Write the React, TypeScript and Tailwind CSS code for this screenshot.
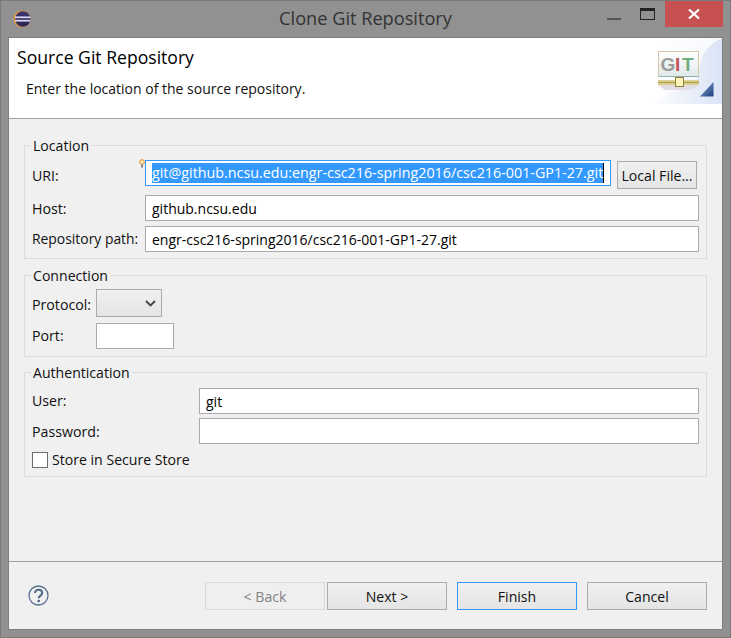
import React from "react";

const font = { fontFamily: '"Open Sans", "Noto Sans", sans-serif' };

function EclipseIcon() {
  return (
    <svg width="18" height="18" viewBox="0 0 18 18">
      <defs>
        <linearGradient id="ec" x1="0" y1="0" x2="0" y2="1">
          <stop offset="0" stopColor="#3c3570" />
          <stop offset="1" stopColor="#2a2550" />
        </linearGradient>
      </defs>
      <circle cx="9" cy="9" r="8.500" fill="#e8963a" />
      <circle cx="9.800" cy="9" r="7.700" fill="url(#ec)" />
      <rect x="2" y="6.400" width="15.400" height="1.800" fill="#d8d6ea" />
      <rect x="2" y="9.800" width="15.400" height="1.800" fill="#d8d6ea" />
    </svg>
  );
}

function GitLogo() {
  return (
    <svg width="71" height="66" viewBox="0 0 71 66" className="block">
      <defs>
        <linearGradient id="bgg" x1="0" y1="0" x2="1" y2="0">
          <stop offset="0" stopColor="#ffffff" />
          <stop offset="0.35" stopColor="#f1f4fb" />
          <stop offset="1" stopColor="#dae4f6" />
        </linearGradient>
        <linearGradient id="box" x1="0" y1="0" x2="0" y2="1">
          <stop offset="0" stopColor="#ffffff" />
          <stop offset="1" stopColor="#dfe8ea" />
        </linearGradient>
        <linearGradient id="tri" x1="0" y1="0" x2="1" y2="1">
          <stop offset="0" stopColor="#8fb2de" />
          <stop offset="1" stopColor="#1c3b78" />
        </linearGradient>
      </defs>
      <rect width="71" height="66" fill="url(#bgg)" />
      <path d="M0 0 H71 C58 6 50 14 46 40 L0 66Z" fill="#ffffff" opacity="0.75" />
      <rect x="7.500" y="13.500" width="40" height="25" fill="url(#box)" stroke="#d9c6a4" />
      <path d="M8 38.500 H48" stroke="#8fb0b0" />
      <text x="9.500" y="33" fontFamily="'Liberation Sans', sans-serif" fontWeight="700" fontSize="19" fill="#9b9b9b">G</text>
      <text x="24" y="33" fontFamily="'Liberation Sans', sans-serif" fontWeight="700" fontSize="19" fill="#c2555b">I</text>
      <text x="31" y="33" fontFamily="'Liberation Sans', sans-serif" fontWeight="700" fontSize="19" fill="#6fae7c">T</text>
      <rect x="7" y="42" width="41" height="5" fill="#d9d08e" />
      <rect x="7" y="44" width="41" height="1" fill="#a99a4c" />
      <path d="M7 47 H48 L40 52 H14Z" fill="#e3dde4" />
      <rect x="24.500" y="39.500" width="8" height="9" fill="#fff3c0" stroke="#8f7f3a" />
      <path d="M62.500 44 V58.500 H49Z" fill="url(#tri)" />
    </svg>
  );
}

function Field({ className = "", children }: { className?: string; children?: React.ReactNode }) {
  return (
    <div className={`h-[26px] bg-white border border-[#ababab] px-[6px] flex items-center text-[14px] text-black whitespace-nowrap overflow-hidden ${className}`}>
      {children}
    </div>
  );
}

function Btn({ label, kind = "normal", className = "" }: { label: string; kind?: "normal" | "disabled" | "default"; className?: string }) {
  const look =
    kind === "disabled"
      ? "border-[#d9d9d9] bg-[#efefef] text-[#838383]"
      : kind === "default"
        ? "border-[#3399ff] bg-gradient-to-b from-[#f0f0f0] to-[#e5e5e5] text-[#111]"
        : "border-[#acacac] bg-gradient-to-b from-[#f0f0f0] to-[#e5e5e5] text-[#111]";
  return (
    <div className={`h-[28px] border flex items-center justify-center pt-[1px] text-[14.1px] ${look} ${className}`}>{label}</div>
  );
}

function Group({ title, className, children }: { title: string; className: string; children: React.ReactNode }) {
  return (
    <fieldset className={`mx-[15px] border border-[#dcdcdc] px-[7px] ${className}`}>
      <legend className="-ml-[1px] px-[2px] text-[14.1px] leading-[18px] text-[#111]">
        <span className="relative top-[1px]">{title}</span>
      </legend>
      {children}
    </fieldset>
  );
}

export default function App() {
  return (
    <div style={font} className="w-[731px] h-[638px] bg-[#919191] flex flex-col overflow-hidden border border-[#7a7a7a]">
      <div className="h-[36px] shrink-0 flex items-center">
        <div className="w-[134px] pl-[12px] flex items-center"><EclipseIcon /></div>
        <div className="flex-1 text-center text-[18.2px] text-[#333]">Clone Git Repository</div>
        <div className="w-[134px] flex items-start self-start">
          <div className="w-[36px] h-[26px] flex items-center justify-center">
            <div className="w-[14px] h-[2px] bg-[#555] mt-[10px]" />
          </div>
          <div className="w-[30px] h-[26px] flex items-center justify-center mr-[3px]">
            <div className="w-[15px] h-[12px] border border-[#222] border-t-[3px]" />
          </div>
          <div className="w-[58px] h-[26px] bg-[#c75050] flex items-center justify-center">
            <svg width="12" height="10" viewBox="0 0 12 10"><path d="M1 0.500 L11 9.500 M11 0.500 L1 9.500" stroke="#fff" strokeWidth="2.200" /></svg>
          </div>
        </div>
      </div>

      <div className="mx-[7px] flex-1 min-h-0 bg-[#f0f0f0] border border-[#7f7f7f] flex flex-col">
        <div className="h-[80px] shrink-0 bg-white border-b border-[#a0a0a0] relative box-content">
          <div className="pl-[8px] pt-[8px] text-[17.6px] leading-[23px] text-black">Source Git Repository</div>
          <div className="pl-[17px] pt-[10px] text-[14px] leading-[20px] text-[#111]">Enter the location of the source repository.</div>
          <div className="absolute right-0 top-0"><GitLogo /></div>
        </div>

        <div className="flex-1 flex flex-col pt-[17px]">
          <Group title="Location" className="h-[123px]">
            <div className="flex items-start mt-[6px] relative">
              <div className="w-[113px] text-[14.2px] leading-[20px] mt-[6px] text-[#111]">URI:</div>
              <div className="h-[26px] w-[466px] bg-white border border-[#3399ff] px-[6px] flex items-center overflow-hidden">
                <span className="bg-[#3399ff] text-white text-[14.3px] leading-[20px] whitespace-nowrap border-r border-black">git@github.ncsu.edu:engr-csc216-spring2016/csc216-001-GP1-27.git</span>
              </div>
              <div className="ml-[6px] mt-[1px] w-[80px]"><Btn label="Local File..." /></div>
              <svg width="6" height="9" viewBox="0 0 6 9" className="absolute left-[107px] top-[-1px]">
                <circle cx="3" cy="3" r="2.300" fill="#fff3c0" stroke="#e08a2a" />
                <rect x="2" y="5.500" width="2" height="3" fill="#888" />
              </svg>
            </div>
            <div className="flex items-center mt-[6px]">
              <div className="w-[113px] text-[14.2px] pt-[2px] text-[#111]">Host:</div>
              <Field className="w-[554px]">github.ncsu.edu</Field>
            </div>
            <div className="flex items-center mt-[5px]">
              <div className="w-[113px] text-[13.9px] text-[#111] whitespace-nowrap">Repository path:</div>
              <Field className="w-[554px]">engr-csc216-spring2016/csc216-001-GP1-27.git</Field>
            </div>
          </Group>

          <Group title="Connection" className="h-[91px] mt-[7px]">
            <div className="flex items-center mt-[5px]">
              <div className="w-[64px] text-[14.2px] pt-[4px] text-[#111]">Protocol:</div>
              <div className="h-[28px] w-[66px] border border-[#acacac] bg-gradient-to-b from-[#f0f0f0] to-[#e5e5e5] flex items-center justify-end pr-[5px]">
                <svg width="11" height="7" viewBox="0 0 11 7"><path d="M1 1 L5.500 5.500 L10 1" fill="none" stroke="#444" strokeWidth="1.800" /></svg>
              </div>
            </div>
            <div className="flex items-center mt-[6px]">
              <div className="w-[64px] text-[14.2px] text-[#111]">Port:</div>
              <Field className="w-[78px]" />
            </div>
          </Group>

          <Group title="Authentication" className="h-[114px] mt-[6px]">
            <div className="flex items-center mt-[7px]">
              <div className="w-[167px] text-[14.2px] text-[#111]">User:</div>
              <Field className="w-[500px]">git</Field>
            </div>
            <div className="flex items-center mt-[4px]">
              <div className="w-[167px] text-[14.2px] pt-[1px] text-[#111]">Password:</div>
              <Field className="w-[500px]" />
            </div>
            <div className="flex items-center mt-[5px]">
              <div className="w-[16px] h-[16px] bg-white border border-[#6f6f6f]" />
              <div className="ml-[4px] text-[14.1px] text-[#111]">Store in Secure Store</div>
            </div>
          </Group>
        </div>

        <div className="h-[68px] shrink-0 border-t border-[#a0a0a0] flex items-start pt-[20px] pl-[19px] pr-[15px]">
          <svg width="21" height="21" viewBox="0 0 21 21" className="mt-[3px]">
            <circle cx="10.500" cy="10.500" r="9.500" fill="none" stroke="#5a7190" strokeWidth="1.300" />
            <path d="M7 8 C7 3.500 14.200 3.800 14.200 8 C14.200 10.600 10.700 10.600 10.700 13.300" fill="none" stroke="#4f6685" strokeWidth="2" />
            <circle cx="10.700" cy="16" r="1.300" fill="#4f6685" />
          </svg>
          <div className="flex-1" />
          <Btn label="< Back" kind="disabled" className="w-[120px]" />
          <Btn label="Next >" className="w-[120px] ml-[2px]" />
          <Btn label="Finish" kind="default" className="w-[120px] ml-[10px]" />
          <Btn label="Cancel" className="w-[120px] ml-[10px]" />
        </div>
      </div>
      <div className="h-[7px] shrink-0" />
    </div>
  );
}
